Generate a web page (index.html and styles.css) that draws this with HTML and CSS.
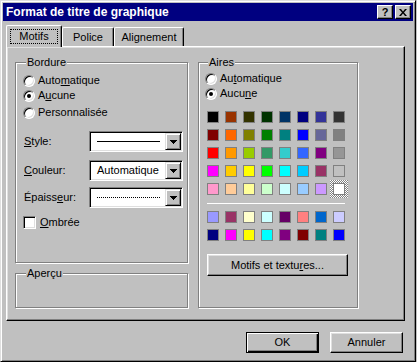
FILE: index.html
```html
<!DOCTYPE html>
<html lang="fr">
<head>
  <meta charset="UTF-8" />
  <title>Format de titre de graphique</title>
  <link rel="stylesheet" href="styles.css">
</head>
<body>

<div class="window">
  <div class="titlebar">
    <span class="title">Format de titre de graphique</span>
    <span class="tbtn help">?</span>
    <span class="tbtn close">
      <svg width="8" height="7" viewBox="0 0 8 7"><path d="M0 0h2l2 2.5 2-2.5h2l-3 3.5 3 3.5h-2l-2-2.5-2 2.5h-2l3-3.5z" fill="#000"/></svg>
    </span>
  </div>

  <div class="content">
    <div class="tabs">
      <div class="tab active"><span class="focus">Motifs</span></div>
      <div class="tab police">Police</div>
      <div class="tab align">Alignement</div>
    </div>

    <div class="panel">
      <div class="col-left">
        <fieldset class="group bordure">
          <legend>Bordure</legend>
          <div class="opt first"><span class="radio"></span>Auto<u>m</u>atique</div>
          <div class="opt"><span class="radio on"></span>A<u>u</u>cune</div>
          <div class="opt third"><span class="radio"></span>Personnalisée</div>

          <div class="field style-row">
            <span class="field-label"><u>S</u>tyle:</span>
            <div class="combo">
              <div class="combo-value"><span class="line solid"></span></div>
              <div class="drop"><svg width="7" height="4" viewBox="0 0 7 4"><path d="M0 0h7L3.5 4z" fill="#000"/></svg></div>
            </div>
          </div>
          <div class="field color-row">
            <span class="field-label"><u>C</u>ouleur:</span>
            <div class="combo">
              <div class="combo-value">Automatique</div>
              <div class="drop"><svg width="7" height="4" viewBox="0 0 7 4"><path d="M0 0h7L3.5 4z" fill="#000"/></svg></div>
            </div>
          </div>
          <div class="field weight-row">
            <span class="field-label">Épaiss<u>e</u>ur:</span>
            <div class="combo">
              <div class="combo-value"><span class="line dotted"></span></div>
              <div class="drop"><svg width="7" height="4" viewBox="0 0 7 4"><path d="M0 0h7L3.5 4z" fill="#000"/></svg></div>
            </div>
          </div>

          <div class="check-row"><span class="checkbox"></span><u>O</u>mbrée</div>
        </fieldset>

        <fieldset class="group apercu">
          <legend>Aperçu</legend>
        </fieldset>
      </div>

      <fieldset class="group aires">
        <legend>Aires</legend>
        <div class="opt first"><span class="radio"></span>Au<u>t</u>omatique</div>
        <div class="opt"><span class="radio on"></span>Aucu<u>n</u>e</div>

        <div class="palette" id="palette"></div>
        <div class="separator"></div>
        <div class="palette chart" id="chartColors"></div>

        <button class="btn textures">Motifs et textu<u>r</u>es...</button>
      </fieldset>
    </div>

    <div class="actions">
      <button class="btn default">OK</button>
      <button class="btn">Annuler</button>
    </div>
  </div>
</div>

<script>
  const couleurs = [
    "#000000", "#993300", "#333300", "#003300", "#003366", "#000080", "#333399", "#333333",
    "#800000", "#ff6600", "#808000", "#008000", "#008080", "#0000ff", "#666699", "#808080",
    "#ff0000", "#ff9900", "#99cc00", "#339966", "#33cccc", "#3366ff", "#800080", "#969696",
    "#ff00ff", "#ffcc00", "#ffff00", "#00ff00", "#00ffff", "#00ccff", "#993366", "#c0c0c0",
    "#ff99cc", "#ffcc99", "#ffff99", "#ccffcc", "#ccffff", "#99ccff", "#cc99ff", "#ffffff"
  ];
  const couleursGraphique = [
    "#9999ff", "#993366", "#ffffcc", "#ccffff", "#660066", "#ff8080", "#0066cc", "#ccccff",
    "#000080", "#ff00ff", "#ffff00", "#00ffff", "#800080", "#800000", "#008080", "#0000ff"
  ];

  function remplir(id, liste, choisie) {
    const grille = document.getElementById(id);
    liste.forEach((c, i) => {
      const cell = document.createElement("div");
      cell.className = "cell" + (i === choisie ? " selected" : "");
      const sw = document.createElement("span");
      sw.className = "swatch";
      sw.style.background = c;
      cell.appendChild(sw);
      grille.appendChild(cell);
    });
  }

  remplir("palette", couleurs, 39);
  remplir("chartColors", couleursGraphique, -1);
</script>

</body>
</html>
```

FILE: styles.css
```css
* {
  box-sizing: border-box;
}

body {
  margin: 0;
  background: #c0c0c0;
  font-family: "Liberation Sans", Arial, sans-serif;
  font-size: 11px;
  line-height: 13px;
  color: #000;
}

u {
  text-decoration-thickness: 1px;
  text-underline-offset: 1px;
}

.window {
  width: 416px;
  height: 362px;
  border: 1px solid;
  border-color: #dfdfdf #000 #000 #dfdfdf;
  box-shadow: inset 1px 1px 0 #fff, inset -1px -1px 0 #808080;
  padding: 2px;
}

/* barre de titre */
.titlebar {
  height: 18px;
  background: #000080;
  color: #fff;
  display: flex;
  align-items: center;
  padding: 0 2px 0 3px;
}

.title {
  flex: 1;
  font-weight: bold;
  font-size: 12px;
}

.tbtn {
  width: 16px;
  height: 14px;
  margin-left: 2px;
  background: #c0c0c0;
  border: 1px solid;
  border-color: #fff #000 #000 #fff;
  box-shadow: inset -1px -1px 0 #808080;
  display: flex;
  align-items: center;
  justify-content: center;
  color: #000;
  font-weight: bold;
  font-size: 11px;
}

.content {
  padding: 4px 8px 0 3px;
}

/* onglets */
.tabs {
  display: flex;
  align-items: flex-end;
  height: 21px;
}

.tab {
  height: 19px;
  border: 1px solid;
  border-bottom: none;
  border-color: #fff #000 #fff #fff;
  border-radius: 2px 2px 0 0;
  box-shadow: inset -1px 0 0 #808080;
  display: flex;
  justify-content: center;
  padding-top: 3px;
  background: #c0c0c0;
}

.tab.active {
  width: 56px;
  height: 22px;
  margin-bottom: -1px;
  position: relative;
  z-index: 1;
}

.tab.police {
  width: 52px;
}

.tab.align {
  width: 70px;
}

.focus {
  width: 48px;
  height: 15px;
  border: 1px dotted #000;
  text-align: center;
}

.panel {
  height: 275px;
  border: 1px solid;
  border-color: #fff #000 #000 #fff;
  box-shadow: inset -1px -1px 0 #808080, inset 1px 1px 0 #dfdfdf;
  display: flex;
  gap: 10px;
  padding: 9px 0 0 8px;
}

.col-left {
  width: 173px;
  display: flex;
  flex-direction: column;
}

/* cadres */
.group {
  margin: 0;
  padding: 0 0 0 7px;
  min-width: 0;
  border: 1px solid #808080;
  box-shadow: 1px 1px 0 #fff, inset 1px 1px 0 #fff;
}

.group legend {
  padding: 0 1px;
  margin-left: 3px;
  background: #c0c0c0;
  line-height: 13px;
}

.bordure {
  height: 207px;
}

.apercu {
  height: 41px;
  margin-top: 4px;
}

.aires {
  width: 160px;
  height: 252px;
  padding-left: 6px;
}

/* options */
.opt {
  display: flex;
  align-items: center;
  height: 15px;
}

.opt.first {
  margin-top: 4px;
}

.aires .opt.first {
  margin-top: 2px;
}

.opt.third {
  margin-top: 2px;
}

.radio {
  width: 12px;
  height: 12px;
  flex-shrink: 0;
  margin-right: 3px;
  border-radius: 50%;
  background: #fff;
  border: 1px solid;
  border-color: #808080 #fff #fff #808080;
  box-shadow: inset 1px 1px 0 #000, inset -1px -1px 0 #dfdfdf;
  display: flex;
  align-items: center;
  justify-content: center;
}

.radio.on::after {
  content: "";
  width: 4px;
  height: 4px;
  border-radius: 50%;
  background: #000;
}

.field {
  display: flex;
  align-items: center;
  height: 21px;
  padding-left: 1px;
}

.style-row {
  margin-top: 11px;
}

.color-row {
  margin-top: 8px;
}

.weight-row {
  margin-top: 6px;
}

.field-label {
  width: 65px;
}

.combo {
  width: 94px;
  height: 21px;
  display: flex;
  background: #fff;
  border: 1px solid;
  border-color: #808080 #fff #fff #808080;
  box-shadow: inset 1px 1px 0 #000, inset -1px -1px 0 #dfdfdf;
  padding: 1px;
}

.combo-value {
  flex: 1;
  display: flex;
  align-items: center;
  padding-left: 6px;
}

.line {
  width: 63px;
}

.line.solid {
  border-top: 1px solid #000;
}

.line.dotted {
  border-top: 1px dotted #000;
}

.drop {
  width: 16px;
  background: #c0c0c0;
  border: 1px solid;
  border-color: #dfdfdf #000 #000 #dfdfdf;
  box-shadow: inset 1px 1px 0 #fff, inset -1px -1px 0 #808080;
  display: flex;
  align-items: center;
  justify-content: center;
}

.drop svg {
  display: block;
  shape-rendering: crispEdges;
}

.check-row {
  display: flex;
  align-items: center;
  height: 14px;
  margin-top: 7px;
}

.checkbox {
  width: 13px;
  height: 13px;
  margin-right: 4px;
  background: #fff;
  border: 1px solid;
  border-color: #808080 #fff #fff #808080;
  box-shadow: inset 1px 1px 0 #000, inset -1px -1px 0 #dfdfdf;
}

/* couleurs */
.palette {
  display: grid;
  grid-template-columns: repeat(8, 18px);
  grid-auto-rows: 18px;
  margin: 7px 0 0 -1px;
}

.palette.chart {
  margin-top: 4px;
}

.cell {
  padding: 3px;
}

.cell.selected {
  background: repeating-conic-gradient(#808080 0 25%, #fff 0 50%) 0 0 / 2px 2px;
}

.swatch {
  display: block;
  width: 12px;
  height: 12px;
  border: 1px solid #808080;
}

.separator {
  width: 138px;
  height: 1px;
  margin: 5px 0 0 2px;
  background: #fff;
}

/* boutons */
.btn {
  width: 73px;
  height: 21px;
  padding: 0;
  background: #c0c0c0;
  border: 1px solid;
  border-color: #fff #000 #000 #fff;
  box-shadow: inset -1px -1px 0 #808080, inset 1px 1px 0 #dfdfdf;
  font: inherit;
  color: #000;
}

.btn.default {
  border-color: #000;
  box-shadow: inset 1px 1px 0 #fff, inset -1px -1px 0 #000, inset -2px -2px 0 #808080;
}

.btn.textures {
  display: block;
  width: 141px;
  height: 22px;
  margin: 10px 0 0 2px;
}

.actions {
  display: flex;
  justify-content: flex-end;
  gap: 11px;
  margin-top: 11px;
  padding-right: 2px;
}
```
